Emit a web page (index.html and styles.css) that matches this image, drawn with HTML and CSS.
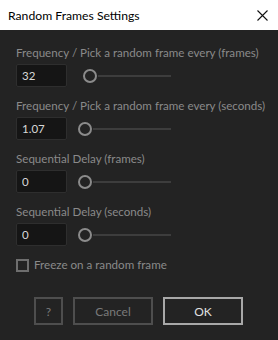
FILE: index.html
```html
<!DOCTYPE html>
<html lang="en">
<head>
  <meta charset="UTF-8">
  <title>Random Frames Settings</title>
  <link rel="stylesheet" href="styles.css">
</head>
<body>
  <div id="dialog">
    <div id="title-bar">
      <span class="title">Random Frames Settings</span>
      <svg class="close" width="11" height="11" viewBox="0 0 11 11">
        <path d="M0.5 0.5 L10.5 10.5 M10.5 0.5 L0.5 10.5" stroke="#111" stroke-width="1.1" fill="none"/>
      </svg>
    </div>

    <div id="content">
      <div class="field">
        <label>Frequency / Pick a random frame every (frames)</label>
        <div class="row">
          <input type="text" value="32">
          <div class="slider first"><span class="knob"></span><span class="track"></span></div>
        </div>
      </div>

      <div class="field">
        <label>Frequency / Pick a random frame every (seconds)</label>
        <div class="row">
          <input type="text" value="1.07">
          <div class="slider"><span class="knob"></span><span class="track"></span></div>
        </div>
      </div>

      <div class="field">
        <label>Sequential Delay (frames)</label>
        <div class="row">
          <input type="text" value="0">
          <div class="slider"><span class="knob"></span><span class="track"></span></div>
        </div>
      </div>

      <div class="field">
        <label>Sequential Delay (seconds)</label>
        <div class="row">
          <input type="text" value="0">
          <div class="slider"><span class="knob"></span><span class="track"></span></div>
        </div>
      </div>

      <div class="check">
        <span class="box"></span>
        <span>Freeze on a random frame</span>
      </div>

      <div id="buttons">
        <button class="help">?</button>
        <button class="cancel">Cancel</button>
        <button class="ok">OK</button>
      </div>
    </div>
  </div>
</body>
</html>
```

FILE: styles.css
```css
* {
  box-sizing: border-box;
}

body {
  margin: 0;
  font-family: 'Lato', 'Open Sans', sans-serif;
  background: #232323;
}

#dialog {
  width: 278px;
  height: 340px;
  background: #232323;
  display: flex;
  flex-direction: column;
}

#title-bar {
  flex: none;
  height: 30px;
  background: #ffffff;
  display: flex;
  align-items: center;
  justify-content: space-between;
  padding: 0 10px 0 8px;
}

#title-bar .title {
  font-size: 12.2px;
  color: #000;
}

#content {
  padding: 15px 16px 0 16px;
  display: flex;
  flex-direction: column;
}

.field {
  display: flex;
  flex-direction: column;
  margin-bottom: 11px;
}

.field label {
  font-size: 11.6px;
  line-height: 16px;
  color: #8a8a8a;
  margin-bottom: 3px;
  white-space: nowrap;
}

.row {
  display: flex;
  align-items: center;
}

.row input {
  width: 51px;
  height: 23px;
  background: #151515;
  border: 1px solid #2e2e2e;
  border-radius: 2px;
  color: #d8d8d8;
  font-family: inherit;
  font-size: 11.5px;
  padding: 0 5px;
  outline: none;
}

.slider {
  display: flex;
  align-items: center;
  margin-left: 11px;
  width: 93px;
}

.slider.first {
  margin-left: 16px;
  width: 88px;
}

.knob {
  width: 14px;
  height: 14px;
  border: 2px solid #8b8b8b;
  border-radius: 50%;
  flex: none;
}

.track {
  flex: 1;
  height: 2px;
  background: #3d3d3d;
  margin-left: 1px;
}

.check {
  display: flex;
  align-items: center;
  font-size: 11.6px;
  line-height: 16px;
  color: #8a8a8a;
}

.check .box {
  width: 13px;
  height: 13px;
  border: 2px solid #6e6e6e;
  margin-right: 5px;
}

#buttons {
  display: flex;
  margin-top: 24px;
  padding-left: 18px;
  gap: 10px;
}

#buttons button {
  height: 28px;
  background: #232323;
  border: 2px solid #4e4e4e;
  font-family: inherit;
  font-size: 12px;
  color: #7a7a7a;
  padding: 0;
}

#buttons .help {
  width: 29px;
}

#buttons .cancel {
  width: 80px;
}

#buttons .ok {
  width: 80px;
  border-color: #a8a8a8;
  color: #e0e0e0;
}
```
